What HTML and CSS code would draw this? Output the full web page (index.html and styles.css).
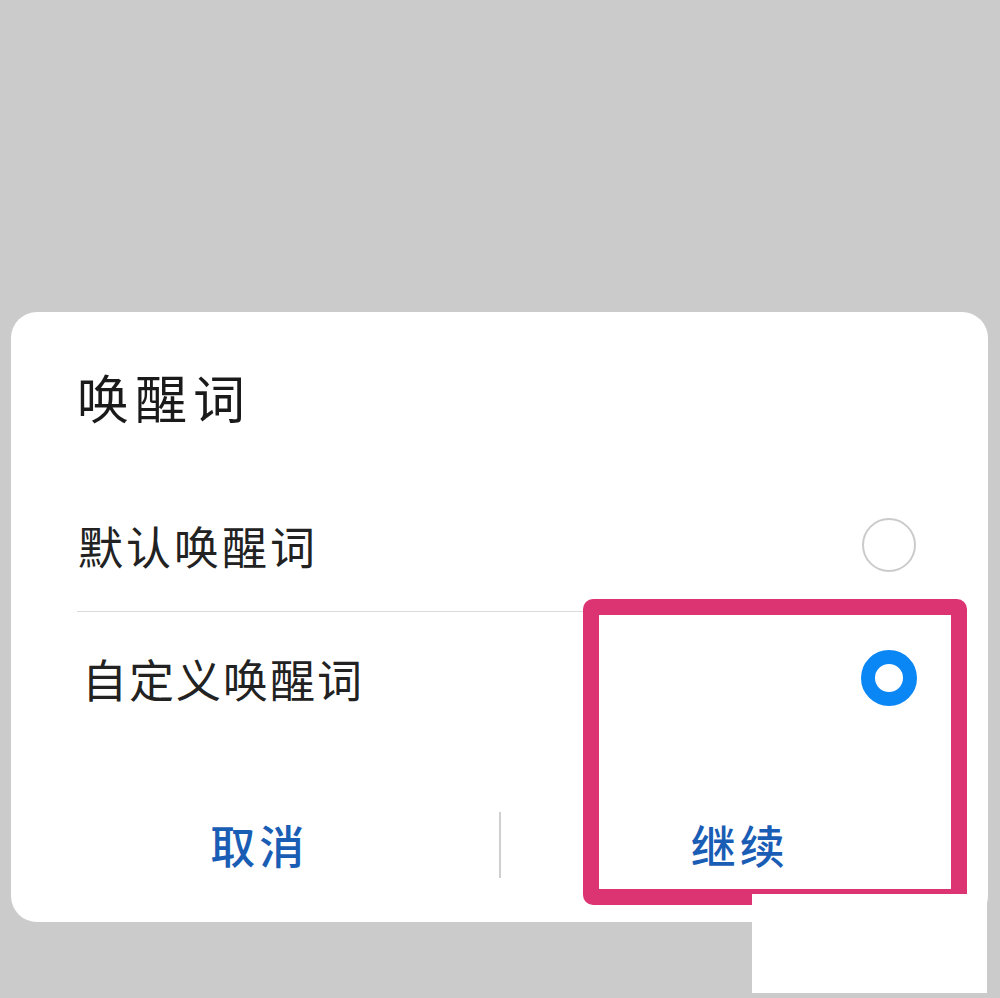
FILE: index.html
```html
<!DOCTYPE html>
<html lang="zh-CN">
<head>
<meta charset="utf-8">
<title>唤醒词</title>
<link rel="stylesheet" href="styles.css">
</head>
<body>
<div class="screen">
  <div class="dialog">
    <div class="title">唤醒词</div>
    <div class="option option-first">
      <span class="label">默认唤醒词</span>
      <span class="radio"></span>
    </div>
    <div class="option option-second">
      <span class="label">自定义唤醒词</span>
      <span class="radio radio-on"></span>
    </div>
    <div class="footer">
      <div class="btn">取消</div>
      <div class="sep"></div>
      <div class="btn">继续</div>
    </div>
  </div>
  <div class="highlight"></div>
  <div class="patch"></div>
</div>
</body>
</html>
```
FILE: styles.css
```css
html, body {
  margin: 0;
  padding: 0;
}
body {
  background: #cbcbcb;
  font-family: "Noto Sans CJK SC", "Noto Sans", sans-serif;
  width: 1000px;
  height: 998px;
  overflow: hidden;
}
.screen {
  position: relative;
  width: 1000px;
  height: 998px;
  padding-top: 312px;
  box-sizing: border-box;
}
.dialog {
  margin-left: 11px;
  width: 977px;
  height: 610px;
  background: #ffffff;
  border-radius: 26px;
  box-sizing: border-box;
  padding-top: 55px;
  display: flex;
  flex-direction: column;
}
.title {
  height: 60px;
  line-height: 60px;
  font-size: 52px;
  letter-spacing: 6px;
  color: #1a1a1a;
  padding-left: 66px;
  margin-bottom: 53px;
}
.option {
  margin: 0 72px 0 66px;
  display: flex;
  align-items: center;
  justify-content: space-between;
}
.option-first {
  height: 131px;
  border-bottom: 1px solid #dadada;
}
.option-second {
  height: 132px;
}
.label {
  font-size: 45px;
  letter-spacing: 3px;
  color: #222222;
  font-weight: 400;
  padding-left: 1px;
}
.option-second .label {
  letter-spacing: 2px;
  padding-left: 5px;
}
.radio {
  width: 54px;
  height: 54px;
  border-radius: 50%;
  border: 2px solid #cbcbcb;
  box-sizing: border-box;
}
.option-first .radio {
  margin-top: -1px;
}
.option-second .radio {
  margin-top: 0;
}
.radio-on {
  border: 14px solid #0a86f5;
  width: 56px;
  height: 56px;
  margin-right: -1px;
}
.footer {
  display: flex;
  align-items: center;
  padding: 68px 9px 0;
  height: 66px;
}
.btn {
  flex: 1;
  text-align: center;
  font-size: 45px;
  letter-spacing: 4px;
  font-weight: 500;
  color: #1a5db5;
  line-height: 66px;
  height: 66px;
}
.sep {
  width: 2px;
  height: 66px;
  background: #d0d0d0;
}
.highlight {
  position: absolute;
  left: 583px;
  top: 599px;
  width: 384px;
  height: 306px;
  box-sizing: border-box;
  border: 16px solid #dc3473;
  border-radius: 10px;
}
.patch {
  position: absolute;
  left: 752px;
  top: 894px;
  width: 235px;
  height: 99px;
  background: #ffffff;
}
```
